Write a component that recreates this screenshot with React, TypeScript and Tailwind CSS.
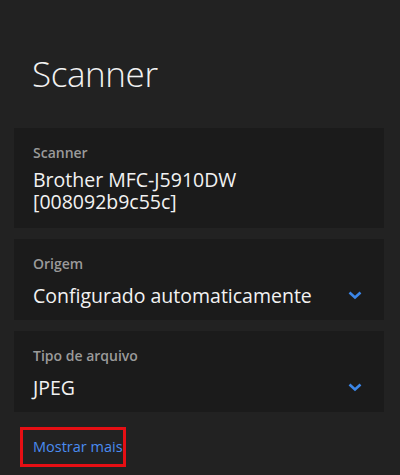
import { ReactNode } from 'react';

const Chevron = () => (
  <svg width="14" height="9" viewBox="0 0 14 9" className="shrink-0">
    <path d="M1.5 1.5 L7 6.5 L12.5 1.5" fill="none" stroke="#3b86e8" strokeWidth="2.6" strokeLinejoin="miter" />
  </svg>
);

const Card = ({ label, children, dropdown }: { label: string; children: ReactNode; dropdown?: boolean }) => (
  <div className={`bg-[#1b1b1b] px-[19px] pt-[15px] ${dropdown ? 'pb-[14px]' : 'pb-[15px]'}`}>
    <div className="text-[14px] leading-[20px] font-semibold text-[#9a9a9a]">{label}</div>
    <div className={`${dropdown ? 'mt-[11px]' : 'mt-[6px]'} flex items-center justify-between pr-[3px]`}>
      <div className={`text-[19.5px] ${dropdown ? 'leading-[21px]' : 'leading-[22px]'} text-[#f2f2f2]`}>{children}</div>
      {dropdown && <Chevron />}
    </div>
  </div>
);

const App = () => {
  return (
    <div className="w-[400px] h-[475px] bg-[#222222] overflow-hidden" style={{ fontFamily: '"Open Sans", "Noto Sans", sans-serif' }}>
      <div className="px-[14px] pt-[48px]">
        <h1 className="pl-[18px] text-[35px] leading-[52px] font-light text-[#f2f2f2] tracking-[-0.4px]">Scanner</h1>
        <div className="mt-[28px] flex flex-col gap-[11px] w-[370px]">
          <Card label="Scanner">
            Brother MFC-J5910DW
            <br />
            [008092b9c55c]
          </Card>
          <Card label="Origem" dropdown>
            Configurado automaticamente
          </Card>
          <Card label="Tipo de arquivo" dropdown>
            JPEG
          </Card>
        </div>
        <div className="mt-[15px] ml-[6px] w-[106px] h-[40px] border-[3px] border-[#e60f14] flex items-center pl-[10px]">
          <span className="whitespace-nowrap text-[14.5px] text-[#4a8cf0]">Mostrar mais</span>
        </div>
      </div>
    </div>
  );
};

export default App;
